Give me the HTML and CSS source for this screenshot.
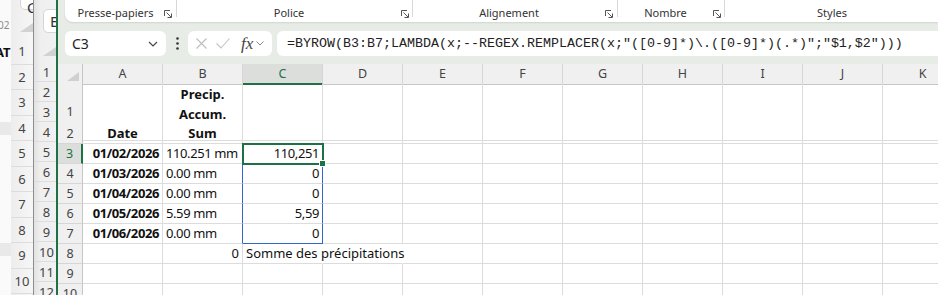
FILE: index.html
```html
<!DOCTYPE html>
<html>
<head>
    <title>Classeur - Precip</title>
    <link rel="stylesheet" href="styles.css">
</head>
<body>
    <!-- windows stacked behind, only their left edge shows -->
    <div class="win back-1">
        <div class="strip">
            <span class="strip-date">02</span>
            <span class="strip-title">AT</span>
            <span class="strip-band first"></span>
            <span class="strip-band second"></span>
        </div>
        <div class="side">
            <div class="side-top">
                <span class="mini-btn top-cut">C</span>
                <svg class="corner" width="13" height="9" viewBox="0 0 13 9"><polygon points="13,0 13,9 0,9" fill="#d2d2d2"/></svg>
            </div>
            <div class="side-num">1</div>
            <div class="side-num">2</div>
            <div class="side-num">3</div>
            <div class="side-num">4</div>
            <div class="side-num">5</div>
            <div class="side-num">6</div>
            <div class="side-num">7</div>
            <div class="side-num">8</div>
            <div class="side-num">9</div>
            <div class="side-num">10</div>
        </div>
    </div>

    <div class="win back-2">
        <div class="side-top tall">
            <span class="mini-btn">E</span>
            <svg class="corner" width="13" height="9" viewBox="0 0 13 9"><polygon points="13,0 13,9 0,9" fill="#d2d2d2"/></svg>
        </div>
        <div class="side-num small">1</div>
        <div class="side-num small">2</div>
        <div class="side-num small">3</div>
        <div class="side-num small">4</div>
        <div class="side-num small">5</div>
        <div class="side-num small">6</div>
        <div class="side-num small">7</div>
        <div class="side-num small">8</div>
        <div class="side-num small">9</div>
        <div class="side-num small">10</div>
        <div class="side-num small">11</div>
        <div class="side-num small">12</div>
    </div>

    <!-- main Excel window -->
    <div class="win main">
        <div class="ribbon">
            <div class="grp g1">
                <span class="grp-label">Presse-papiers</span>
                <svg class="launcher" width="8" height="8" viewBox="0 0 8 8"><path d="M0.5 6V0.5H6 M2.5 2.5L7 7 M7.5 3.5V7.5H3.5" fill="none" stroke="#555"/></svg>
                <span class="sep"></span>
            </div>
            <div class="grp g2">
                <span class="grp-label">Police</span>
                <svg class="launcher" width="8" height="8" viewBox="0 0 8 8"><path d="M0.5 6V0.5H6 M2.5 2.5L7 7 M7.5 3.5V7.5H3.5" fill="none" stroke="#555"/></svg>
                <span class="sep"></span>
            </div>
            <div class="grp g3">
                <span class="grp-label">Alignement</span>
                <svg class="launcher" width="8" height="8" viewBox="0 0 8 8"><path d="M0.5 6V0.5H6 M2.5 2.5L7 7 M7.5 3.5V7.5H3.5" fill="none" stroke="#555"/></svg>
                <span class="sep"></span>
            </div>
            <div class="grp g4">
                <span class="grp-label">Nombre</span>
                <svg class="launcher" width="8" height="8" viewBox="0 0 8 8"><path d="M0.5 6V0.5H6 M2.5 2.5L7 7 M7.5 3.5V7.5H3.5" fill="none" stroke="#555"/></svg>
                <span class="sep"></span>
            </div>
            <div class="grp g5">
                <span class="grp-label">Styles</span>
            </div>
        </div>

        <div class="fbar">
            <div class="namebox">
                <span>C3</span>
                <svg width="10" height="6" viewBox="0 0 10 6"><path d="M1 1l4 4 4-4" fill="none" stroke="#444" stroke-width="1.2"/></svg>
            </div>
            <svg class="vdots" width="3" height="13" viewBox="0 0 3 13"><circle cx="1.5" cy="1.5" r="1.3" fill="#333"/><circle cx="1.5" cy="6.5" r="1.3" fill="#333"/><circle cx="1.5" cy="11.5" r="1.3" fill="#333"/></svg>
            <div class="fxbox">
                <svg class="fx-cancel" width="11" height="11" viewBox="0 0 11 11"><path d="M0.5 0.5l10 10 M10.5 0.5l-10 10" stroke="#bdbdbd" stroke-width="1.1"/></svg>
                <svg class="fx-ok" width="14" height="11" viewBox="0 0 14 11"><path d="M0.5 5.5l4.5 4.5 8.5-9.5" fill="none" stroke="#c4c4c4" stroke-width="1.1"/></svg>
                <span class="fx">fx</span>
                <svg width="8" height="5" viewBox="0 0 8 5"><path d="M0.5 0.5l3.5 3.5 3.5-3.5" fill="none" stroke="#888"/></svg>
            </div>
            <div class="formula">=BYROW(B3:B7;LAMBDA(x;--REGEX.REMPLACER(x;"([0-9]*)\.([0-9]*)(.*)";"$1,$2")))</div>
        </div>

        <div class="sheet">
            <div class="row head">
                <div class="c rh corner-cell"><svg width="12" height="9" viewBox="0 0 12 9"><polygon points="12,0 12,9 0,9" fill="#d0d0d0"/></svg></div>
                <div class="c ch">A</div><div class="c ch">B</div><div class="c ch sel">C</div><div class="c ch">D</div><div class="c ch">E</div><div class="c ch">F</div><div class="c ch">G</div><div class="c ch">H</div><div class="c ch">I</div><div class="c ch">J</div><div class="c ch">K</div>
            </div>
            <div class="row tall">
                <div class="c rh">1</div>
                <div class="c"></div><div class="c b center wrap">Precip.<br>Accum.</div><div class="c"></div><div class="c"></div><div class="c"></div><div class="c"></div><div class="c"></div><div class="c"></div><div class="c"></div><div class="c"></div><div class="c"></div>
            </div>
            <div class="row">
                <div class="c rh">2</div>
                <div class="c b center">Date</div><div class="c b center">Sum</div><div class="c"></div><div class="c"></div><div class="c"></div><div class="c"></div><div class="c"></div><div class="c"></div><div class="c"></div><div class="c"></div><div class="c"></div>
            </div>
            <div class="row">
                <div class="c rh sel">3</div>
                <div class="c b right num">01/02/2026</div><div class="c num">110.251 mm</div><div class="c right num active">110,251</div><div class="c"></div><div class="c"></div><div class="c"></div><div class="c"></div><div class="c"></div><div class="c"></div><div class="c"></div><div class="c"></div>
            </div>
            <div class="row">
                <div class="c rh">4</div>
                <div class="c b right num">01/03/2026</div><div class="c num rng-l">0.00 mm</div><div class="c right num rng">0</div><div class="c"></div><div class="c"></div><div class="c"></div><div class="c"></div><div class="c"></div><div class="c"></div><div class="c"></div><div class="c"></div>
            </div>
            <div class="row">
                <div class="c rh">5</div>
                <div class="c b right num">01/04/2026</div><div class="c num rng-l">0.00 mm</div><div class="c right num rng">0</div><div class="c"></div><div class="c"></div><div class="c"></div><div class="c"></div><div class="c"></div><div class="c"></div><div class="c"></div><div class="c"></div>
            </div>
            <div class="row">
                <div class="c rh">6</div>
                <div class="c b right num">01/05/2026</div><div class="c num rng-l">5.59 mm</div><div class="c right num rng">5,59</div><div class="c"></div><div class="c"></div><div class="c"></div><div class="c"></div><div class="c"></div><div class="c"></div><div class="c"></div><div class="c"></div>
            </div>
            <div class="row">
                <div class="c rh">7</div>
                <div class="c b right num">01/06/2026</div><div class="c num rng-l">0.00 mm</div><div class="c right num rng rng-end">0</div><div class="c"></div><div class="c"></div><div class="c"></div><div class="c"></div><div class="c"></div><div class="c"></div><div class="c"></div><div class="c"></div>
            </div>
            <div class="row">
                <div class="c rh">8</div>
                <div class="c"></div><div class="c right">0</div><div class="c no-r">Somme des précipitations</div><div class="c no-r"></div><div class="c"></div><div class="c"></div><div class="c"></div><div class="c"></div><div class="c"></div><div class="c"></div><div class="c"></div>
            </div>
            <div class="row">
                <div class="c rh">9</div>
                <div class="c"></div><div class="c"></div><div class="c"></div><div class="c"></div><div class="c"></div><div class="c"></div><div class="c"></div><div class="c"></div><div class="c"></div><div class="c"></div><div class="c"></div>
            </div>
            <div class="row">
                <div class="c rh">10</div>
                <div class="c"></div><div class="c"></div><div class="c"></div><div class="c"></div><div class="c"></div><div class="c"></div><div class="c"></div><div class="c"></div><div class="c"></div><div class="c"></div><div class="c"></div>
            </div>
        </div>
    </div>
</body>
</html>
```

FILE: styles.css
```css
body {
    margin: 0;
    width: 938px;
    height: 295px;
    overflow: hidden;
    display: flex;
    font-family: "Noto Sans", sans-serif;
    background-color: #fff;
}

.win {
    height: 295px;
    overflow: hidden;
    flex-shrink: 0;
}

/* Back windows */
.back-1 {
    display: flex;
    width: 34px;
    border-right: 1px solid #8e8e8e;
    box-sizing: border-box;
}

.strip {
    width: 11px;
    display: flex;
    flex-direction: column;
    background-color: #fafafa;
    overflow: hidden;
}

.strip-date {
    margin-top: 19px;
    height: 12px;
    font-size: 10px;
    line-height: 12px;
    color: #8a8a8a;
    margin-left: -2px;
}

.strip-title {
    margin-top: 14px;
    height: 14px;
    font-size: 13px;
    line-height: 14px;
    font-weight: bold;
    color: #111;
    margin-left: -5px;
    white-space: nowrap;
}

.strip-band {
    height: 13px;
    background-color: #e9e9e9;
}

.strip-band.first {
    margin-top: 63px;
}

.strip-band.second {
    margin-top: 108px;
}

.side {
    width: 22px;
    background: linear-gradient(to right, #ededed, #f6f6f6);
}

.side-top {
    height: 39px;
    display: flex;
    flex-direction: column;
    align-items: flex-start;
}

.side-top.tall {
    height: 62px;
}

.mini-btn {
    margin-left: 9px;
    margin-top: 9px;
    width: 24px;
    height: 24px;
    box-sizing: border-box;
    background-color: #fff;
    border: 1px solid #d6d6d6;
    border-radius: 5px;
    font-size: 15px;
    line-height: 22px;
    padding-left: 6px;
    color: #333;
}

.mini-btn.top-cut {
    margin-top: -14px;
    line-height: 40px;
}

.corner {
    margin-left: 9px;
    margin-top: 13px;
}

.side-top.tall .corner {
    margin-top: 14px;
}

.side-num {
    height: 25.5px;
    line-height: 25.5px;
    text-align: center;
    font-size: 13px;
    color: #444;
    border-bottom: 1px solid #dddddd;
    box-sizing: border-box;
}

.back-2 {
    width: 22px;
    background: linear-gradient(to right, #e2e2e2, #efefef 30%, #f1f1f1);
}

.side-num.small {
    height: 20px;
    line-height: 20px;
    padding-left: 3px;
}

/* Main window */
.main {
    flex: 1;
    border-left: 2px solid #1e7145;
    background-color: #e7ece7;
}

.ribbon {
    margin-left: 7px;
    height: 22px;
    display: flex;
    background-color: #fff;
    border-bottom-left-radius: 8px;
    box-shadow: 0 1px 2px rgba(0, 0, 0, 0.1);
}

.grp {
    display: flex;
    align-items: flex-start;
    flex-shrink: 0;
}

.grp-label {
    flex: 1;
    text-align: center;
    font-size: 11px;
    line-height: 14px;
    padding-top: 6px;
    color: #333;
    white-space: nowrap;
}

.launcher {
    margin-top: 10px;
    margin-right: 4px;
}

.sep {
    width: 1px;
    height: 17px;
    background-color: #d8d8d8;
}

.g1 { width: 112px; }
.g1 .grp-label { padding-left: 2px; }
.g2 { width: 236px; }
.g2 .launcher { margin-right: 3px; }
.g3 { width: 205px; }
.g4 { width: 107px; }
.g4 .launcher { margin-right: 3px; }
.g5 { width: 214px; }

.fbar {
    margin-top: 9px;
    margin-left: 7px;
    height: 25px;
    display: flex;
    align-items: center;
}

.namebox {
    width: 101px;
    height: 25px;
    box-sizing: border-box;
    background-color: #fff;
    border-radius: 6px;
    display: flex;
    align-items: center;
    justify-content: space-between;
    padding: 0 8px 0 7px;
    font-size: 14px;
    color: #222;
}

.vdots {
    margin: 0 9px 0 10px;
}

.fxbox {
    width: 84px;
    height: 25px;
    box-sizing: border-box;
    background-color: #fff;
    border-radius: 6px;
    display: flex;
    align-items: center;
    padding-left: 8px;
}

.fx-ok {
    margin-left: 9px;
}

.fx {
    margin-left: 11px;
    margin-right: 3px;
    font-family: "Liberation Serif", serif;
    font-style: italic;
    font-size: 17px;
    color: #444;
    line-height: 20px;
}

.formula {
    flex: 1;
    margin-left: 5px;
    height: 25px;
    background-color: #fff;
    border-radius: 6px 0 0 6px;
    padding-left: 10px;
    font-family: "Liberation Mono", monospace;
    font-size: 13.33px;
    line-height: 25px;
    color: #222;
    white-space: nowrap;
    overflow: hidden;
}

/* Grid */
.sheet {
    margin-top: 8px;
    background-color: #fff;
    height: 240px;
}

.row {
    display: grid;
    grid-template-columns: 25px repeat(11, 80px);
    height: 20px;
}

.row.tall {
    height: 40px;
}

.c {
    box-sizing: border-box;
    border-right: 1px solid #dcdcdc;
    border-bottom: 1px solid #dcdcdc;
    padding: 0 3px;
    font-size: 13px;
    line-height: 19px;
    color: #111;
    white-space: nowrap;
}

.c.b { font-weight: bold; }
.c.center { text-align: center; }
.c.right { text-align: right; }
.c.wrap { line-height: 20px; }
.c.no-r { border-right-color: transparent; }
.c.num { letter-spacing: -0.4px; }

.ch, .rh {
    background-color: #f0f0f0;
    color: #444;
    font-size: 12.5px;
    text-align: center;
    padding: 0;
}

.ch {
    border-right-color: #d6d6d6;
    border-bottom-color: #c6c6c6;
}

.rh {
    border-right-color: #c6c6c6;
    border-bottom-color: #d6d6d6;
}

.row.tall .rh {
    line-height: 56px;
}

.corner-cell {
    display: flex;
    align-items: flex-end;
    justify-content: flex-end;
    padding: 0 3px 3px 0;
}

.ch.sel {
    background-color: #dcdedc;
    color: #1e7145;
    border-bottom: 2px solid #1e7145;
}

.rh.sel {
    background-color: #dcdedc;
    color: #1e7145;
    border-right: 2px solid #1e7145;
}

.active {
    position: relative;
    z-index: 1;
    outline: 2px solid #1e7145;
    outline-offset: -1px;
}

.active::after {
    content: "";
    position: absolute;
    right: -4px;
    bottom: -4px;
    width: 5px;
    height: 5px;
    background-color: #1e7145;
    border: 1px solid #fff;
}

.rng-l { border-right-color: #3166d0; }
.rng { border-right-color: #3166d0; }
.rng-end { border-bottom-color: #3166d0; }
```
